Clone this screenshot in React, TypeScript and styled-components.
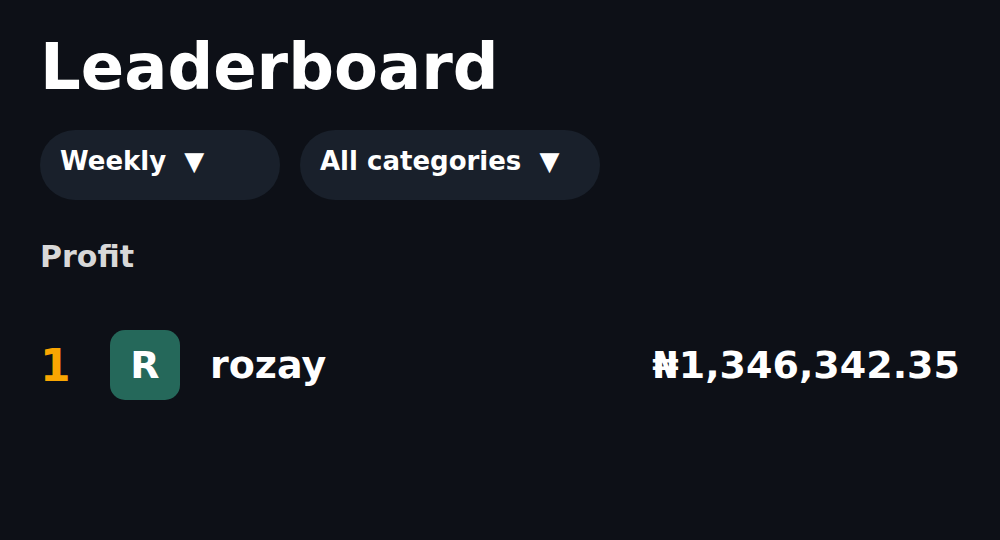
import styled, { createGlobalStyle } from 'styled-components';

const GlobalStyle = createGlobalStyle`
  html, body {
    margin: 0;
    padding: 0;
    background-color: #0d1017;
  }
  body {
    font-family: 'DejaVu Sans', 'Noto Sans', sans-serif;
    color: #ffffff;
  }
`;

interface Entry {
  rank: number;
  name: string;
  initial: string;
  amount: string;
}

const entries: Entry[] = [
  { rank: 1, name: 'rozay', initial: 'R', amount: '₦1,346,342.35' },
];

const App = () => {
  return (
    <>
      <GlobalStyle />
      <Page>
        <Title>Leaderboard</Title>
        <Filters>
          <Pill $width={240}>Weekly&nbsp; ▼</Pill>
          <Pill $width={300}>All categories&nbsp; ▼</Pill>
        </Filters>
        <SectionLabel>Profit</SectionLabel>
        <List>
          {entries.map((e) => (
            <Row key={e.rank}>
              <Rank>{e.rank}</Rank>
              <Avatar>{e.initial}</Avatar>
              <Name>{e.name}</Name>
              <Amount>{e.amount}</Amount>
            </Row>
          ))}
        </List>
      </Page>
    </>
  );
};

const Page = styled.div`
  width: 1000px;
  height: 540px;
  box-sizing: border-box;
  padding: 30px 40px 0;
  display: flex;
  flex-direction: column;
`;

const Title = styled.h1`
  margin: 0;
  font-size: 64px;
  font-weight: 700;
  line-height: normal;
`;

const Filters = styled.div`
  display: flex;
  gap: 20px;
  margin-top: 26px;
`;

const Pill = styled.div<{ $width: number }>`
  width: ${(p) => p.$width}px;
  height: 70px;
  box-sizing: border-box;
  padding: 16px 20px;
  border-radius: 35px;
  background-color: #19202b;
  font-size: 26px;
  font-weight: 700;
  white-space: nowrap;
`;

const SectionLabel = styled.div`
  margin-top: 39px;
  font-size: 30px;
  font-weight: 700;
  color: #d8d8d8;
`;

const List = styled.div`
  margin-top: 56px;
  display: flex;
  flex-direction: column;
`;

const Row = styled.div`
  display: flex;
  align-items: center;
  height: 70px;
`;

const Rank = styled.div`
  width: 70px;
  font-size: 44px;
  font-weight: 700;
  color: #f9a602;
`;

const Avatar = styled.div`
  width: 70px;
  height: 70px;
  border-radius: 15px;
  background-color: #25685a;
  display: flex;
  align-items: center;
  justify-content: center;
  font-size: 38px;
  font-weight: 700;
  color: #ffffff;
`;

const Name = styled.div`
  margin-left: 30px;
  font-size: 38px;
  font-weight: 700;
  flex: 1;
`;

const Amount = styled.div`
  font-size: 38px;
  font-weight: 700;
`;

export default App;
